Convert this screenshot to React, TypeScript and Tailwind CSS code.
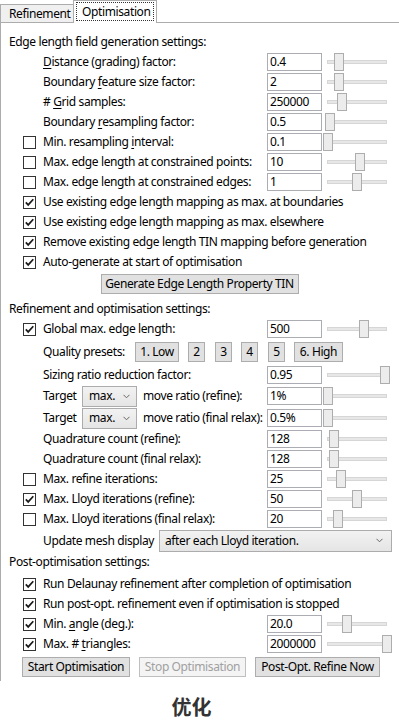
import React from "react";

const U = ({ children }: { children: React.ReactNode }) => (
  <span className="underline underline-offset-[2px] decoration-[1px]">{children}</span>
);

function Checkbox({ checked }: { checked: boolean }) {
  return (
    <div className="w-[13px] h-[13px] border border-[#333333] bg-white flex items-center justify-center shrink-0">
      {checked && (
        <svg width="11" height="11" viewBox="0 0 11 11">
          <path d="M1.8 5.4 L4.2 7.9 L9.3 2.2" fill="none" stroke="#1a1a1a" strokeWidth="1.7" />
        </svg>
      )}
    </div>
  );
}

function Input({ value }: { value: string }) {
  return (
    <div className="w-[55px] h-[18px] border border-[#abadb3] bg-white pl-[2px] flex items-center shrink-0 leading-none">
      {value}
    </div>
  );
}

function Slider({ pos }: { pos: number }) {
  return (
    <div className="relative w-[70px] h-[18px] shrink-0">
      <div className="absolute left-[5px] right-[5px] top-[7px] h-[4px] bg-[#e7e7e7] border border-[#d6d6d6]" />
      <div
        className="absolute top-0 w-[10px] h-[18px] bg-[#ececec] border border-[#adadad]"
        style={{ left: pos }}
      />
    </div>
  );
}

function Chevron() {
  return (
    <svg width="7" height="5" viewBox="0 0 7 5" className="shrink-0">
      <path d="M0.5 0.8 L3.5 3.8 L6.5 0.8" fill="none" stroke="#666" strokeWidth="1" />
    </svg>
  );
}

function Row({
  check,
  label,
  value,
  pos,
}: {
  check?: boolean;
  label: React.ReactNode;
  value?: string;
  pos?: number;
}) {
  return (
    <div className="flex items-center h-[20px] pl-[22px] pr-[7px]">
      {check === undefined ? <div className="w-[13px] shrink-0" /> : <Checkbox checked={check} />}
      <div className="ml-[7px] flex-1 whitespace-nowrap">{label}</div>
      {value !== undefined && <Input value={value} />}
      {pos !== undefined && <Slider pos={pos} />}
    </div>
  );
}

function Btn({
  children,
  w,
  disabled,
}: {
  children: React.ReactNode;
  w: string;
  disabled?: boolean;
}) {
  return (
    <div
      className={
        disabled
          ? `${w} h-[20px] shrink-0 border border-[#bfbfbf] bg-[#f4f4f4] text-[#a0a0a0] flex items-center justify-center whitespace-nowrap`
          : `${w} h-[20px] shrink-0 border border-[#adadad] bg-[#e1e1e1] flex items-center justify-center whitespace-nowrap`
      }
    >
      {children}
    </div>
  );
}

function TargetRow({ label, value }: { label: string; value: string }) {
  return (
    <div className="flex items-center h-[22px] pl-[22px] pr-[7px]">
      <div className="w-[13px] shrink-0" />
      <div className="ml-[7px] w-[39px] shrink-0">Target</div>
      <div className="w-[55px] h-[21px] shrink-0 border border-[#acacac] bg-gradient-to-b from-[#f2f2f2] to-[#e5e5e5] flex items-center pl-[6px] pr-[6px]">
        <span className="flex-1">max.</span>
        <Chevron />
      </div>
      <div className="ml-[6px] flex-1 whitespace-nowrap">{label}</div>
      <Input value={value} />
      <Slider pos={1} />
    </div>
  );
}

export default function App() {
  return (
    <div className="w-[399px] h-[728px] bg-white text-[12px] tracking-[-0.38px] text-black font-['Noto_Sans',sans-serif] leading-[16px] overflow-hidden">
      {/* Tabs */}
      <div className="flex items-end h-[22px]">
        <div className="w-[74px] h-[18px] border border-b-0 border-[#acacac] bg-[#f0f0f0] flex items-center pl-[8px]">
          Refinement
        </div>
        <div className="relative z-10 -ml-px -mb-px w-[84px] h-[23px] border border-b-0 border-[#acacac] bg-white flex items-start pt-[1px] pl-[2px]">
          <div className="h-[19px] w-[78px] border border-dotted border-[#333] flex items-center pl-[5px]">
            Optimisation
          </div>
        </div>
      </div>

      {/* Panel */}
      <div className="border-l border-t border-[#acacac] pt-[9px] pb-[4px]">
        <div className="h-[20px] flex items-center pl-[8px]">Edge length field generation settings:</div>
        <Row label={<><U>D</U>istance (grading) factor:</>} value="0.4" pos={12} />
        <Row label={<>Boundary <U>f</U>eature size factor:</>} value="2" pos={12} />
        <Row label={<># <U>G</U>rid samples:</>} value="250000" pos={15} />
        <Row label={<>Boundary <U>r</U>esampling factor:</>} value="0.5" pos={3} />
        <Row check={false} label={<>Min. resampling <U>i</U>nterval:</>} value="0.1" pos={1} />
        <Row check={false} label="Max. edge length at constrained points:" value="10" pos={33} />
        <Row check={false} label="Max. edge length at constrained edges:" value="1" pos={30} />
        <Row check={true} label="Use existing edge length mapping as max. at boundaries" />
        <Row check={true} label="Use existing edge length mapping as max. elsewhere" />
        <Row check={true} label="Remove existing edge length TIN mapping before generation" />
        <Row check={true} label="Auto-generate at start of optimisation" />
        <div className="mt-[2px] flex justify-center pr-[1px]">
          <Btn w="w-[198px]">Generate Edge Length Property TIN</Btn>
        </div>

        <div className="mt-[5px] h-[20px] flex items-center pl-[8px]">Refinement and optimisation settings:</div>
        <Row check={true} label="Global max. edge length:" value="500" pos={37} />
        <div className="flex items-center h-[26px] pl-[42px]">
          <div className="w-[92px] shrink-0">Quality presets:</div>
          <Btn w="w-[44px]">1. Low</Btn>
          <div className="ml-[9px]"><Btn w="w-[17px]">2</Btn></div>
          <div className="ml-[10px]"><Btn w="w-[17px]">3</Btn></div>
          <div className="ml-[9px]"><Btn w="w-[17px]">4</Btn></div>
          <div className="ml-[10px]"><Btn w="w-[17px]">5</Btn></div>
          <div className="ml-[9px]"><Btn w="w-[49px]">6. High</Btn></div>
        </div>
        <Row label="Sizing ratio reduction factor:" value="0.95" pos={58} />
        <TargetRow label="move ratio (refine):" value="1%" />
        <TargetRow label="move ratio (final relax):" value="0.5%" />
        <Row label="Quadrature count (refine):" value="128" pos={7} />
        <Row label="Quadrature count (final relax):" value="128" pos={7} />
        <Row check={false} label="Max. refine iterations:" value="25" pos={14} />
        <Row check={true} label="Max. Lloyd iterations (refine):" value="50" pos={30} />
        <Row check={false} label="Max. Lloyd iterations (final relax):" value="20" pos={11} />
        <div className="flex items-center h-[23px] pl-[42px] pr-[7px]">
          <div className="w-[116px] shrink-0 whitespace-nowrap">Update mesh display</div>
          <div className="flex-1 h-[22px] border border-[#acacac] bg-gradient-to-b from-[#f2f2f2] to-[#e5e5e5] flex items-center pl-[5px] pr-[8px]">
            <span className="flex-1">after each Lloyd iteration.</span>
            <Chevron />
          </div>
        </div>

        <div className="h-[20px] flex items-center pl-[8px]">Post-optimisation settings:</div>
        <div className="mt-[2px]">
          <Row check={true} label="Run Delaunay refinement after completion of optimisation" />
        </div>
        <Row check={true} label="Run post-opt. refinement even if optimisation is stopped" />
        <Row check={true} label={<>Min. <U>a</U>ngle (deg.):</>} value="20.0" pos={20} />
        <Row check={true} label={<>Max. # <U>t</U>riangles:</>} value="2000000" pos={60} />
        <div className="mt-[3px] flex items-center pl-[21px]">
          <Btn w="w-[108px]">Start Optimisation</Btn>
          <div className="ml-[9px]"><Btn w="w-[107px]" disabled>Stop Optimisation</Btn></div>
          <div className="ml-[9px]"><Btn w="w-[125px]">Post-Opt. Refine Now</Btn></div>
        </div>
      </div>

      <div className="h-[48px] pt-[4px] flex items-center justify-center pr-[16px] text-[20px] tracking-normal font-bold text-[#333] font-['Noto_Sans_CJK_SC',sans-serif]">
        优化
      </div>
    </div>
  );
}
